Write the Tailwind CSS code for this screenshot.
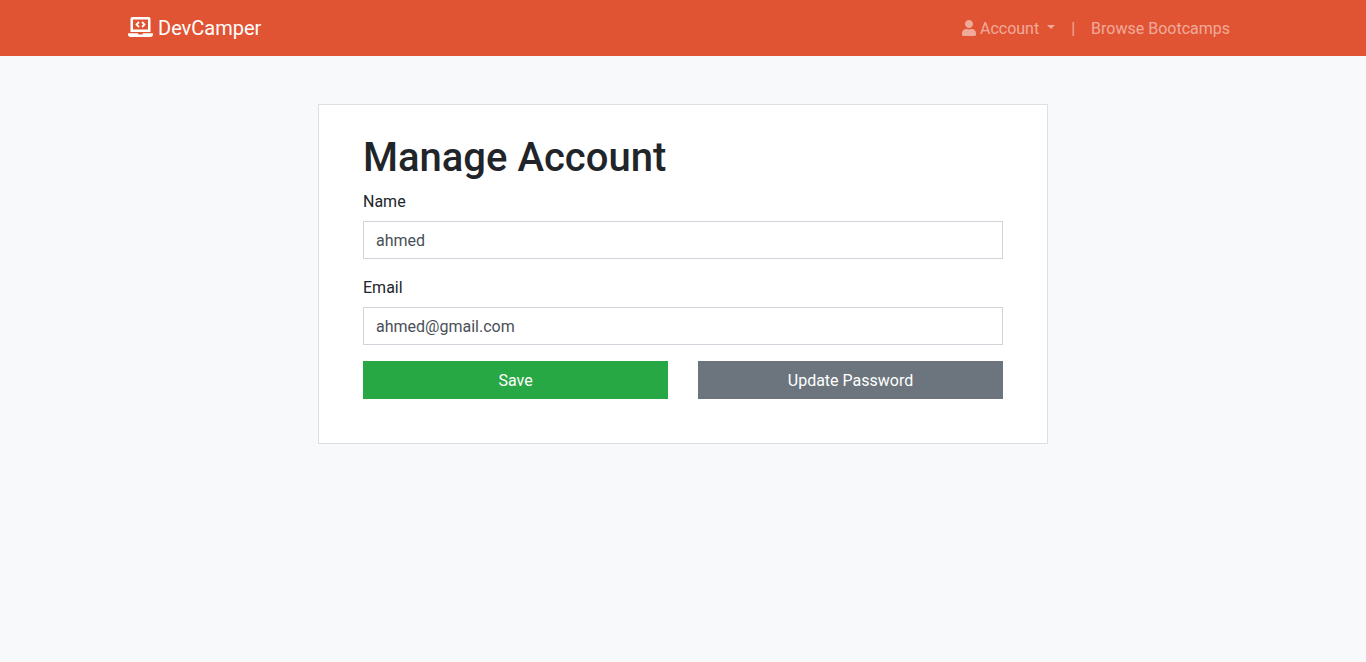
<!DOCTYPE html>
<html lang="en">
<head>
<meta charset="utf-8">
<meta name="viewport" content="width=device-width, initial-scale=1">
<title>DevCamper</title>
<script src="https://cdn.jsdelivr.net/npm/@tailwindcss/browser@4"></script>
</head>
<body class="min-h-screen bg-[#f8f9fb] font-[Roboto,sans-serif] text-base text-[#212529]">
<header class="bg-[#e15433]">
  <nav class="mx-auto flex h-14 max-w-[1140px] items-center justify-between px-[15px]" aria-label="Main">
    <a href="#" class="flex items-center gap-[5px] text-xl text-white">
      <svg class="mb-0.5 h-5 w-[25px]" viewBox="0 0 640 512" fill="currentColor" aria-hidden="true"><path d="M255.030 261.650c6.250 6.250 16.380 6.250 22.630 0l11.310-11.310c6.250-6.250 6.250-16.380 0-22.630L253.250 192l35.710-35.720c6.250-6.250 6.250-16.380 0-22.630l-11.310-11.310c-6.250-6.250-16.380-6.250-22.630 0l-58.340 58.340c-6.250 6.250-6.250 16.380 0 22.630l58.350 58.340zm96.010-11.300l11.310 11.310c6.250 6.250 16.380 6.250 22.630 0l58.340-58.340c6.250-6.250 6.250-16.380 0-22.630l-58.340-58.340c-6.250-6.250-16.380-6.250-22.630 0l-11.310 11.310c-6.250 6.250-6.250 16.380 0 22.630L386.750 192l-35.710 35.720c-6.250 6.250-6.250 16.380 0 22.630zM624 416H381.540c-.74 19.810-14.710 32-32.740 32H288c-18.690 0-33.020-17.470-32.770-32H16c-8.800 0-16 7.200-16 16v16c0 35.200 28.800 64 64 64h512c35.200 0 64-28.800 64-64v-16c0-8.800-7.200-16-16-16zM576 48c0-26.400-21.600-48-48-48H112C85.600 0 64 21.600 64 48v336h512V48zm-64 272H128V64h384v256z"/></svg>
      DevCamper
    </a>
    <div class="flex items-center pt-0.5 text-white/50">
      <button type="button" class="flex items-center px-2 py-2" aria-haspopup="true">
        <svg class="mr-1 mb-0.5 h-4 w-[14px]" viewBox="0 0 448 512" fill="currentColor" aria-hidden="true"><path d="M224 256c70.700 0 128-57.300 128-128S294.700 0 224 0 96 57.300 96 128s57.300 128 128 128zm89.600 32h-16.700c-22.200 10.200-46.900 16-72.900 16s-50.600-5.800-72.900-16h-16.700C60.200 288 0 348.200 0 422.400V464c0 26.500 21.500 48 48 48h352c26.500 0 48-21.500 48-48v-41.600c0-74.200-60.200-134.400-134.400-134.400z"/></svg>
        Account
        <svg class="mb-1 ml-2 h-1 w-2" viewBox="0 0 8 4" fill="currentColor" aria-hidden="true"><path d="M0 0h8L4 4z"/></svg>
      </button>
      <span class="px-2">|</span>
      <a href="#" class="px-2 py-2">Browse Bootcamps</a>
    </div>
  </nav>
</header>
<main class="mx-auto mt-12 max-w-[760px] px-[15px]">
  <section class="border border-[#dfdfdf] bg-white px-11 pt-[29px] pb-11">
    <h1 class="mb-2 text-[40px] leading-12 font-medium">Manage Account</h1>
    <form>
      <label for="name" class="mb-[7px] block leading-6">Name</label>
      <input id="name" type="text" value="ahmed" class="mb-[17px] block h-[38px] w-full border border-[#ced4da] bg-white px-3 text-[#495057]">
      <label for="email" class="mb-[7px] block leading-6">Email</label>
      <input id="email" type="email" value="ahmed@gmail.com" class="mb-4 block h-[38px] w-full border border-[#ced4da] bg-white px-3 text-[#495057]">
      <div class="grid grid-cols-2 gap-[30px]">
        <button type="submit" class="h-[38px] bg-[#28a745] pt-0.5 text-white">Save</button>
        <a href="#" class="flex h-[38px] items-center justify-center bg-[#6c757d] pt-0.5 text-white">Update Password</a>
      </div>
    </form>
  </section>
</main>
</body>
</html>
